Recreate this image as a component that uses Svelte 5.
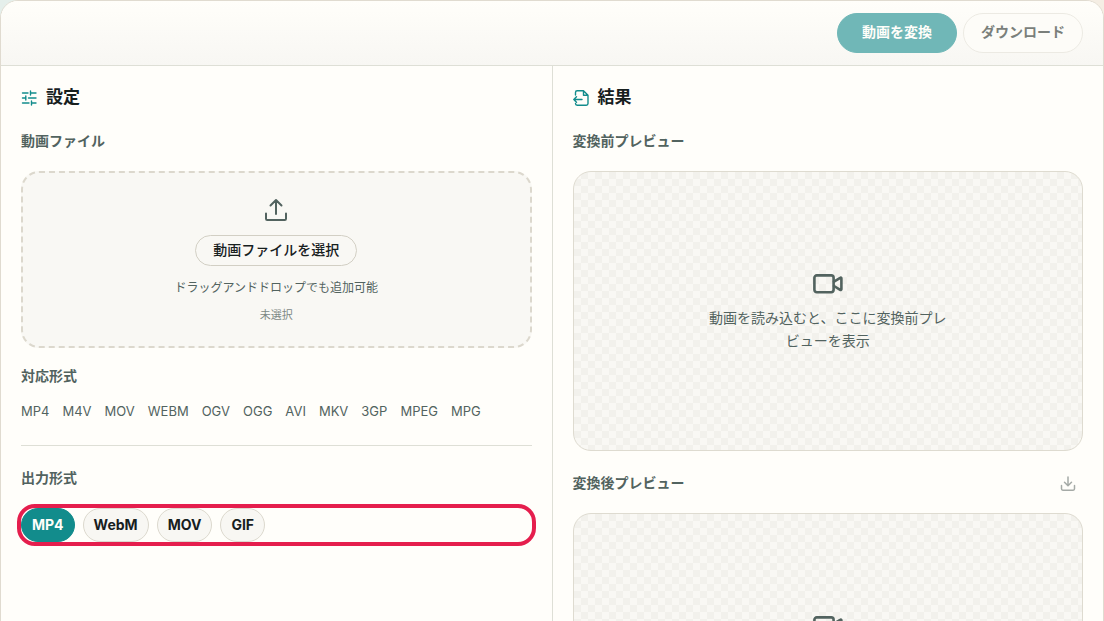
<script>
  const supported = ['MP4', 'M4V', 'MOV', 'WEBM', 'OGV', 'OGG', 'AVI', 'MKV', '3GP', 'MPEG', 'MPG'];
  const outputs = ['MP4', 'WebM', 'MOV', 'GIF'];
  let selected = $state('MP4');
  let picker;
</script>

{#snippet preview(message)}
  <div class="preview">
    <svg class="camera" viewBox="0 0 32 24" aria-hidden="true">
      <rect x="2.4" y="3.4" width="19.2" height="16.8" rx="2.4" />
      <path d="M22 9.600 28.200 5.800c.6-.4 1.200 0 1.200.6v10.800c0 .6-.6 1-1.200.6L22 14" />
    </svg>
    <p>{message}</p>
  </div>
{/snippet}

<main class="card">
  <header>
    <button class="primary" type="button">動画を変換</button>
    <button class="secondary" type="button">ダウンロード</button>
  </header>
  <div class="columns">
    <section class="settings">
      <h2>
        <svg class="title-icon" viewBox="0 0 16 16" aria-hidden="true">
          <path d="M1.500 3H7M9.500 3H15M9.500 1v4M1.500 8H4.800M7.500 8H15M4.800 6v4M1.500 13H8M10.500 13H15M10.500 11v4" />
        </svg>
        設定
      </h2>
      <h3>動画ファイル</h3>
      <div class="drop">
        <svg class="upload" viewBox="0 0 24 24" aria-hidden="true">
          <path d="M12 16V2M6.500 7.500 12 2l5.500 5.500M2 15.500v5.300c0 .8.500 1.200 1.200 1.200h17.600c.7 0 1.200-.4 1.200-1.200v-5.300" />
        </svg>
        <button class="choose" type="button" onclick={() => picker.click()}>動画ファイルを選択</button>
        <input bind:this={picker} type="file" accept="video/*" aria-label="動画ファイル" hidden />
        <p class="hint">ドラッグアンドドロップでも追加可能</p>
        <p class="status">未選択</p>
      </div>
      <h3>対応形式</h3>
      <ul class="formats">
        {#each supported as format}<li>{format}</li>{/each}
      </ul>
      <hr />
      <h3>出力形式</h3>
      <div class="outputs" role="group" aria-label="出力形式">
        {#each outputs as output}
          <button
            type="button"
            class:active={selected === output}
            aria-pressed={selected === output}
            onclick={() => (selected = output)}>{output}</button>
        {/each}
      </div>
    </section>

    <section class="results">
      <h2>
        <svg class="title-icon" viewBox="0 0 16 16" aria-hidden="true">
          <path d="M2.500 5V2.500C2.500 1.300 3.200.8 4.200.8H10.500L15 5.300V13.500c0 1-.6 1.700-1.700 1.700H4.200c-1 0-1.700-.5-1.700-1.700M10.500.8V5.300H15M9 9.500H.8M3.500 6.800.8 9.500l2.700 2.700" />
        </svg>
        結果
      </h2>
      <div class="row"><h3>変換前プレビュー</h3></div>
      {@render preview('動画を読み込むと、ここに変換前プレビューを表示')}
      <div class="row">
        <h3>変換後プレビュー</h3>
        <button class="save" type="button" aria-label="ダウンロード">
          <svg viewBox="0 0 16 16" aria-hidden="true">
            <path d="M8 1v8.500M4.500 6.300 8 9.800l3.500-3.500M1.500 9.500v3.300c0 .9.400 1.400 1.300 1.400h10.400c.9 0 1.300-.5 1.300-1.400V9.500" />
          </svg>
        </button>
      </div>
      {@render preview('')}
    </section>
  </div>
</main>

<style>
  :global(body) {
    margin: 0;
    height: 100vh;
    overflow: hidden;
    background: linear-gradient(90deg, #e5efeb, #f5eee4);
  }

  .card {
    box-sizing: border-box;
    overflow: hidden;
    border: 1px solid #e0dbd0;
    border-radius: 18px;
    background: #fffefa;
    color: #17201e;
    font-family: Inter, "Noto Sans CJK JP", sans-serif;
    font-size: 14px;
    line-height: 20px;
  }

  button {
    box-sizing: border-box;
    border: 1px solid #dcd9ce;
    border-radius: 20px;
    background: none;
    color: inherit;
    font: inherit;
    font-weight: 700;
    cursor: pointer;
  }

  header {
    display: flex;
    justify-content: flex-end;
    gap: 6px;
    padding: 12px 20px;
    border-bottom: 1px solid #dedfd6;
    background: linear-gradient(#fffefa, #f8f7f3);
  }

  header button {
    width: 120px;
    height: 40px;
    padding: 0 0 2px;
  }

  .primary {
    border-color: #70b7b7;
    background: #70b7b7;
    color: #fffefa;
  }

  .secondary {
    border-color: #eceae3;
    background: #fdfcf8;
    color: #7a7f7b;
  }

  .columns {
    display: flex;
  }

  section {
    flex: 1 1 0;
    min-width: 0;
    padding: 20px;
  }

  .settings {
    border-right: 1px solid #dedfd6;
  }

  h2,
  h3,
  p,
  ul {
    margin: 0;
  }

  h2 {
    display: flex;
    align-items: center;
    gap: 9px;
    margin-bottom: 24px;
    font-size: 17px;
    line-height: 22px;
  }

  h3 {
    color: #52635f;
    font-size: 14px;
    line-height: 18px;
  }

  svg {
    fill: none;
    stroke: currentColor;
    stroke-width: 2;
    stroke-linecap: round;
    stroke-linejoin: round;
  }

  .title-icon {
    width: 16px;
    height: 16px;
    margin-top: 2px;
    color: #128c8c;
    stroke-width: 1.4;
  }

  .drop {
    display: flex;
    flex-direction: column;
    align-items: center;
    margin: 21px 0 19px;
    padding: 25px 20px 21px;
    border: 2px dashed #dcd8cd;
    border-radius: 18px;
    background: #f9f8f4;
    color: #52635f;
  }

  .upload {
    width: 24px;
    height: 24px;
    margin-bottom: 13px;
  }

  .choose {
    height: 31px;
    padding: 0 17px 2px;
    border-color: #d2cfc4;
    color: #17201e;
    font-weight: 500;
  }

  .hint {
    margin: 12px 0 7px;
    font-size: 12px;
  }

  .status {
    color: #7d8985;
    font-size: 11px;
  }

  .formats {
    display: flex;
    flex-wrap: wrap;
    gap: 13px;
    padding: 0;
    margin: 16px 0 24px;
    color: #52635f;
    font-size: 13px;
    list-style: none;
  }

  hr {
    margin: 0 0 23px;
    border: 0;
    border-top: 1px solid #dedfd6;
  }

  .outputs {
    display: flex;
    gap: 8px;
    margin-top: 21px;
    border-radius: 14px;
    outline: 4px solid #e51e4d;
  }

  .outputs button {
    height: 34px;
    padding: 0 10px;
    background: #f8f7f3;
  }

  .outputs .active {
    border-color: #128c8c;
    background: #128c8c;
    color: #fffefa;
  }

  .row {
    display: flex;
    align-items: center;
    justify-content: space-between;
    margin-bottom: 21px;
  }

  .preview {
    box-sizing: border-box;
    display: flex;
    flex-direction: column;
    align-items: center;
    justify-content: center;
    gap: 10px;
    height: 280px;
    margin-bottom: 23px;
    padding-top: 2px;
    border: 1px solid #dedbd0;
    border-radius: 18px;
    background: conic-gradient(#f2f1ec 25%, #f9f8f4 0 50%, #f2f1ec 0 75%, #f9f8f4 0) 0 0 / 14px 14px;
    color: #52635f;
    text-align: center;
  }

  .preview p {
    max-width: 240px;
    min-height: 46px;
    line-height: 23px;
  }

  .camera {
    width: 32px;
    height: 24px;
    stroke-width: 2.6;
  }

  .save {
    display: flex;
    padding: 2px 7px 0;
    border: 0;
    color: #a5aaa6;
  }

  .save svg {
    width: 16px;
    height: 16px;
    stroke-width: 1.5;
  }
</style>
